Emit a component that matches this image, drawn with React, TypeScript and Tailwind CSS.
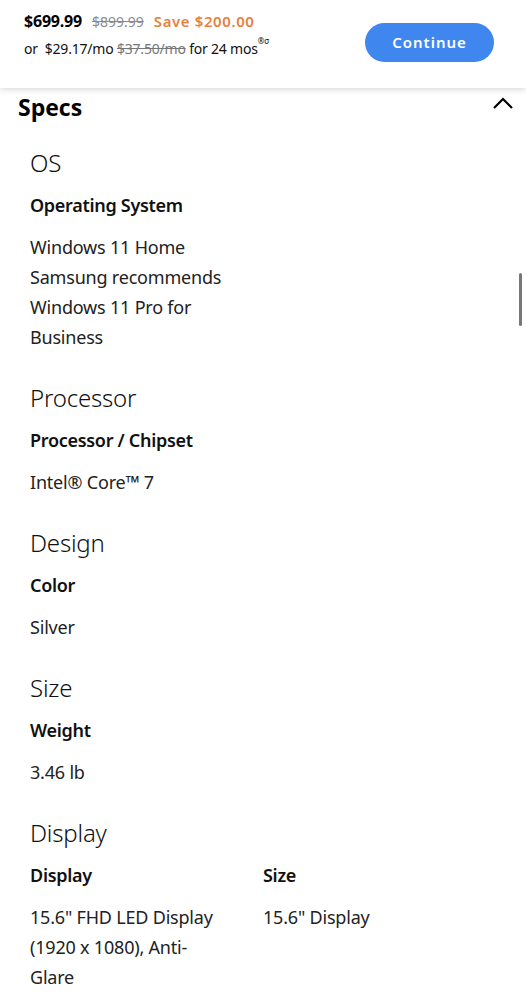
import React from "react";

const font = { fontFamily: '"Noto Sans", "Open Sans", Arial, sans-serif' } as React.CSSProperties;

function Section({ title, items }: { title: string; items: { label: string; lines: string[] }[] }) {
  return (
    <div className="mb-[30px]">
      <div className="text-[24px] font-light leading-[32px] text-[#111] tracking-[-0.2px]">{title}</div>
      <div className="grid grid-cols-[233px_1fr] mt-[11px]">
        {items.map((it) => (
          <div key={it.label}>
            <div className="text-[18px] font-semibold leading-[30px] text-[#111] tracking-[-0.3px]">{it.label}</div>
            <div className="mt-[12px] text-[18px] leading-[30px] text-[#222] tracking-[-0.2px]">
              {it.lines.map((l) => (
                <div key={l}>{l}</div>
              ))}
            </div>
          </div>
        ))}
      </div>
    </div>
  );
}

export default function App() {
  return (
    <div className="relative w-[526px] h-[1000px] overflow-hidden bg-white" style={font}>
      <div className="relative z-10 h-[88px] bg-white shadow-[0_2px_6px_rgba(0,0,0,0.14)] flex items-start justify-between pl-[24px] pr-[32px]">
        <div className="pt-[9px]">
          <div className="flex items-baseline gap-[10px]">
            <span className="text-[16px] font-bold text-black tracking-[-0.2px]">$699.99</span>
            <span className="text-[14px] text-[#8a8a8a] line-through">$899.99</span>
            <span className="text-[15px] font-semibold text-[#e8803e] tracking-[0.6px]">Save $200.00</span>
          </div>
          <div className="mt-[5px] text-[14px] text-[#111] tracking-[-0.2px]">
            or&nbsp; $29.17/mo <span className="text-[#777] line-through">$37.50/mo</span> for 24 mos<sup className="text-[8px] align-super">®σ</sup>
          </div>
        </div>
        <button className="mt-[23px] w-[129px] h-[39px] rounded-full bg-[#3f86ee] text-white text-[15px] font-semibold tracking-[1px]">
          Continue
        </button>
      </div>

      <div className="flex items-center justify-between pl-[18px] pr-[12px] pt-[2px]">
        <span className="text-[23px] font-bold text-black tracking-[0px]" style={{ fontFamily: '"Open Sans", "Noto Sans", sans-serif' }}>Specs</span>
        <svg width="22" height="14" viewBox="0 0 22 14" className="-mt-[9px]">
          <path d="M2 12 L11 3 L20 12" fill="none" stroke="#000" strokeWidth="2.2" />
        </svg>
      </div>

      <div className="pl-[30px] pt-[22px]">
        <Section title="OS" items={[{ label: "Operating System", lines: ["Windows 11 Home", "Samsung recommends", "Windows 11 Pro for", "Business"] }]} />
        <Section title="Processor" items={[{ label: "Processor / Chipset", lines: ["Intel® Core™ 7"] }]} />
        <Section title="Design" items={[{ label: "Color", lines: ["Silver"] }]} />
        <Section title="Size" items={[{ label: "Weight", lines: ["3.46 lb"] }]} />
        <Section
          title="Display"
          items={[
            { label: "Display", lines: ['15.6" FHD LED Display', "(1920 x 1080), Anti-", "Glare"] },
            { label: "Size", lines: ['15.6" Display'] },
          ]}
        />
      </div>

      <div className="absolute right-[4px] top-[273px] w-[3px] h-[53px] rounded-full bg-[#777]" />
    </div>
  );
}
